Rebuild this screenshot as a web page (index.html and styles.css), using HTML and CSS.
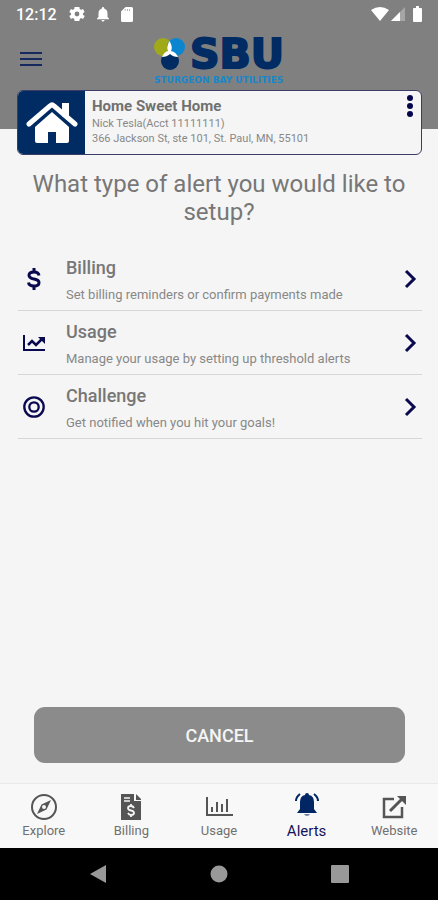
FILE: index.html
```html
<!DOCTYPE html>
<html lang="en">
<head>
<meta charset="utf-8">
<meta name="viewport" content="width=device-width, initial-scale=1">
<title>Alerts</title>
<link rel="stylesheet" href="styles.css">
</head>
<body>
<div class="app">
  <header class="header">
    <div class="status">
      <span class="time">12:12</span>
      <svg width="16" height="16" viewBox="2 2 20 20" fill="#fff" aria-hidden="true"><path d="M19.4 13a7.500 7.500 0 0 0 0-2l2.100-1.600-2-3.500-2.500 1a7.300 7.300 0 0 0-1.700-1L15 3.300H9l-.4 2.600a7.300 7.300 0 0 0-1.700 1l-2.500-1-2 3.500L4.600 11a7.500 7.500 0 0 0 0 2l-2.200 1.600 2 3.500 2.500-1a7.300 7.300 0 0 0 1.700 1L9 20.700h6l.4-2.600a7.300 7.300 0 0 0 1.700-1l2.500 1 2-3.500zM12 15a3 3 0 1 1 0-6 3 3 0 0 1 0 6z"/></svg>
      <svg width="12" height="16" viewBox="4 2 16 20" fill="#fff" aria-hidden="true"><path d="M12 22a2 2 0 0 0 2-2h-4a2 2 0 0 0 2 2zm6-6v-5c0-3.100-1.600-5.600-4.500-6.300V4a1.500 1.500 0 0 0-3 0v.7C7.600 5.400 6 7.900 6 11v5l-2 2v1h16v-1z"/></svg>
      <svg width="12" height="15" viewBox="4 2 16 20" fill="#fff" aria-hidden="true"><path fill-rule="evenodd" d="M18 2h-8L4 8v12a2 2 0 0 0 2 2h12a2 2 0 0 0 2-2V4a2 2 0 0 0-2-2zM9 5h1v2H9zm3 0h1v2h-1zm3 0h1v2h-1z"/></svg>
      <svg class="wifi" width="18" height="14" viewBox="0 0 18 14" fill="#fff" aria-hidden="true"><path d="M0 3Q9-3 18 3L9 14z"/></svg>
      <svg class="signal" width="14" height="14" viewBox="0 0 14 14" fill="#fff" aria-hidden="true"><path opacity=".3" d="M14 0v14H0z"/><path d="M9 5v9H0z"/></svg>
      <svg class="battery" width="9" height="16" viewBox="0 0 9 16" fill="#fff" aria-hidden="true"><path d="M3 0h3v2h2q1 0 1 1v12q0 1-1 1H1q-1 0-1-1V3q0-1 1-1h2z"/></svg>
    </div>
    <div class="brandbar">
      <button class="menu" aria-label="Menu"><svg width="22" height="16" viewBox="0 0 22 16" stroke="#15295f" stroke-width="2"><path d="M0 2h22M0 8h22M0 14h22"/></svg></button>
      <div class="brand">
        <div class="brand-top">
          <svg width="32" height="32" viewBox="0 0 32 32" aria-hidden="true"><circle cx="9" cy="9" r="9" fill="#a0aa19"/><circle cx="22" cy="9" r="9" fill="#0b85cf"/><circle cx="16" cy="23" r="9" fill="#002b63"/><path fill="#fff" d="M15.500 3Q19 9 17 13q5 1 7 6-5 0-8-3-3 3-8 3 2-5 6-6-2-4 1.500-10z"/></svg>
          <span class="brand-name">SBU</span>
        </div>
        <span class="tagline">STURGEON BAY UTILITIES</span>
      </div>
    </div>
    <section class="account">
      <div class="home"><svg width="52" height="42" viewBox="0 0 52 42" aria-hidden="true"><path fill="#fff" d="M26 10 43 25v14q0 2-2 2H30V30h-8v11H11q-2 0-2-2V25z"/><path d="M3 22 26 3l23 19" fill="none" stroke="#002b63" stroke-width="9"/><path fill="#fff" d="M36 1h7v18l-7-5z"/><path d="M3 22 24 4q2-2 4 0l21 18" fill="none" stroke="#fff" stroke-width="5" stroke-linecap="round"/></svg></div>
      <div class="details">
        <h2>Home Sweet Home</h2>
        <p>Nick Tesla(Acct 11111111)</p>
        <p>366 Jackson St, ste 101, St. Paul, MN, 55101</p>
      </div>
      <button class="more" aria-label="More options"><svg width="6" height="22" viewBox="0 0 6 22" fill="#05054d"><circle cx="3" cy="3" r="3"/><circle cx="3" cy="11" r="3"/><circle cx="3" cy="19" r="3"/></svg></button>
    </section>
  </header>

  <main class="main">
    <h1>What type of alert you would like to setup?</h1>
    <nav class="options" aria-label="Alert types">
      <a class="option" href="#billing">
        <svg width="32" height="24" viewBox="0 0 32 24" fill="none" stroke="#09094f" aria-hidden="true"><path stroke-width="3" d="M21 8.500Q20.500 5 16 5q-5 0-5 3.200 0 2.800 5 3.800t5 3.500Q21 19 16 19q-5 0-5.500-3.500"/><path stroke-width="3" d="M16 1v4M16 19v4"/></svg>
        <span class="copy"><strong>Billing</strong><span>Set billing reminders or confirm payments made</span></span>
        <svg class="chevron" width="14" height="20" viewBox="0 0 14 20" aria-hidden="true"><path d="m2 2 8 8-8 8"/></svg>
      </a>
      <a class="option" href="#usage">
        <svg width="32" height="24" viewBox="0 0 32 24" fill="none" stroke="#09094f" stroke-width="2" aria-hidden="true"><path d="M6 4v15h21"/><path stroke-width="2.500" d="m10 14 4-4 4 4 6-6"/><path fill="#09094f" stroke="none" d="M20 6h7v7z"/></svg>
        <span class="copy"><strong>Usage</strong><span>Manage your usage by setting up threshold alerts</span></span>
        <svg class="chevron" width="14" height="20" viewBox="0 0 14 20" aria-hidden="true"><path d="m2 2 8 8-8 8"/></svg>
      </a>
      <a class="option" href="#challenge">
        <svg width="32" height="24" viewBox="0 0 32 24" fill="none" stroke="#09094f" stroke-width="2.300" aria-hidden="true"><circle cx="16" cy="12" r="9.700"/><circle cx="16" cy="12" r="4.700"/></svg>
        <span class="copy"><strong>Challenge</strong><span>Get notified when you hit your goals!</span></span>
        <svg class="chevron" width="14" height="20" viewBox="0 0 14 20" aria-hidden="true"><path d="m2 2 8 8-8 8"/></svg>
      </a>
    </nav>
    <button class="cancel">CANCEL</button>
  </main>

  <nav class="tabs" aria-label="Main">
    <a class="tab" href="#explore"><svg width="28" height="28" viewBox="0 0 28 28" aria-hidden="true"><circle cx="14" cy="14" r="12" fill="none" stroke="#555" stroke-width="2"/><path fill="#555" fill-rule="evenodd" d="m21 7-4.500 9.500L7 21l4.500-9.500zm-7 5a2 2 0 1 0 0 4 2 2 0 0 0 0-4z"/></svg>Explore</a>
    <a class="tab" href="#bills"><svg width="28" height="28" viewBox="0 0 28 28" aria-hidden="true"><path fill="#555" d="M4 1h13v7h7v19H4z"/><path fill="#555" d="m19 1 5 5v1h-5z"/><path stroke="#f6f6f6" stroke-width="1.500" d="M7 5h6M7 8h6"/><path fill="none" stroke="#f6f6f6" stroke-width="1.800" d="M17 15q-1-2-3-2-3 0-3 2t3 2.500T17 20t-3 2q-2 0-3-2M14 11v2M14 22v2"/></svg>Billing</a>
    <a class="tab" href="#reports"><svg width="28" height="28" viewBox="0 0 28 28" fill="none" stroke="#555" stroke-width="2" aria-hidden="true"><path d="M2 4v18h26"/><path d="M7 19v-5M12 19V9M17 19v-8M22 19V6"/></svg>Usage</a>
    <a class="tab active" href="#alerts" aria-current="page"><svg width="28" height="28" viewBox="0 0 28 28" aria-hidden="true"><path fill="#002663" d="M14 0q2 0 2 2 5 1 5 7v7l3 4H4l3-4V9q0-6 5-7 0-2 2-2z"/><path fill="#7183a5" d="M11 21h6q-1 2-3 2t-3-2z"/><path fill="none" stroke="#002663" stroke-width="2" d="M7 1Q3 4 3 8M21 1q4 3 4 7"/></svg>Alerts</a>
    <a class="tab" href="#website"><svg width="28" height="28" viewBox="0 0 28 28" fill="none" stroke="#555" aria-hidden="true"><path stroke-width="2.500" d="M14 6H4v18h18V14"/><path stroke-width="3" d="m10 18 13-13"/><path fill="#555" stroke="none" d="M17 3h9v9z"/></svg>Website</a>
  </nav>
  <div class="system">
    <button aria-label="Back"><svg width="18" height="18" viewBox="0 0 18 18" fill="#999"><path d="M17 0v18L1 9z"/></svg></button>
    <button aria-label="Home"><svg width="18" height="18" viewBox="0 0 18 18" fill="#999"><circle cx="9" cy="9" r="8.500"/></svg></button>
    <button aria-label="Recent apps"><svg width="18" height="18" viewBox="0 0 18 18" fill="#999"><rect width="18" height="18" rx="1"/></svg></button>
  </div>
</div>
</body>
</html>
```
FILE: styles.css
```css
* { box-sizing: border-box; }
body { margin: 0; background: #f5f5f5; color: #777; font-family: Roboto, "Liberation Sans", sans-serif; }
h1, h2, p { margin: 0; }
a { color: inherit; text-decoration: none; }
button { border: 0; padding: 0; background: none; font: inherit; }
svg { display: block; flex: none; }

.app { min-height: 100vh; display: flex; flex-direction: column; }

.header { background: #808080; padding: 0 16px; margin-bottom: 26px; }
.status { display: flex; align-items: center; height: 28px; gap: 12px; }
.time { color: #fff; font-size: 16px; font-weight: 500; }
.wifi { margin-left: auto; }
.signal { margin-left: -10px; }
.battery { margin-left: -4px; }
.brandbar { display: grid; grid-template-columns: 1fr auto 1fr; align-items: center; height: 62px; padding: 0 4px; }
.menu { width: 24px; height: 24px; }
.brand { padding-top: 2px; color: #002b63; font-family: "DejaVu Sans", sans-serif; font-weight: 700; }
.brand-top { display: flex; align-items: center; gap: 4px; height: 40px; }
.brand-name { font-size: 41px; line-height: 40px; -webkit-text-stroke: 2px #002b63; }
.tagline { display: block; color: #1787cb; font-size: 9px; line-height: 12px; white-space: nowrap; }

.account { display: flex; height: 65px; margin: 0 0 -26px 1px; background: #f5f5f5; border: 1px solid #3c3c68; border-radius: 6px; overflow: hidden; }
.home { display: grid; place-items: center; width: 67px; background: #002b63; }
.details { flex: 1; padding: 5px 0 0 7px; font-size: 11px; line-height: 15px; color: #888; white-space: nowrap; }
.details h2 { font-size: 15px; font-weight: 700; line-height: 20px; color: #707070; }
.more { align-self: flex-start; padding: 4px 8px; }

.main { flex: 1; display: flex; flex-direction: column; padding: 15px 16px 20px; }
h1 { font-size: 24px; font-weight: 400; line-height: 28px; text-align: center; }
.options { margin-top: 21px; padding-left: 2px; }
.option { display: flex; align-items: center; height: 64px; padding-right: 4px; border-bottom: 1px solid #d6d6d6; }
.copy { flex: 1; display: flex; flex-direction: column; gap: 9px; padding: 3px 0 0 16px; font-size: 13px; line-height: 16px; color: #888; }
.copy strong { font-size: 18px; font-weight: 500; line-height: 20px; color: #777; }
.chevron { fill: none; stroke: #09094f; stroke-width: 3; }
.cancel { height: 56px; margin: auto 17px 0 18px; border-radius: 11px; background: #8b8b8b; color: #f5f5f5; font-size: 18px; font-weight: 500; }

.tabs { display: grid; grid-template-columns: repeat(5, 1fr); height: 65px; border-top: 1px solid #e9e9e9; background: #f8f8f8; }
.tab { display: flex; flex-direction: column; align-items: center; padding-top: 9px; font-size: 13px; line-height: 20px; color: #707070; }
.tab.active { color: #14145c; font-size: 15px; }

.system { display: flex; justify-content: center; align-items: center; gap: 103px; height: 52px; background: #000; }
```
